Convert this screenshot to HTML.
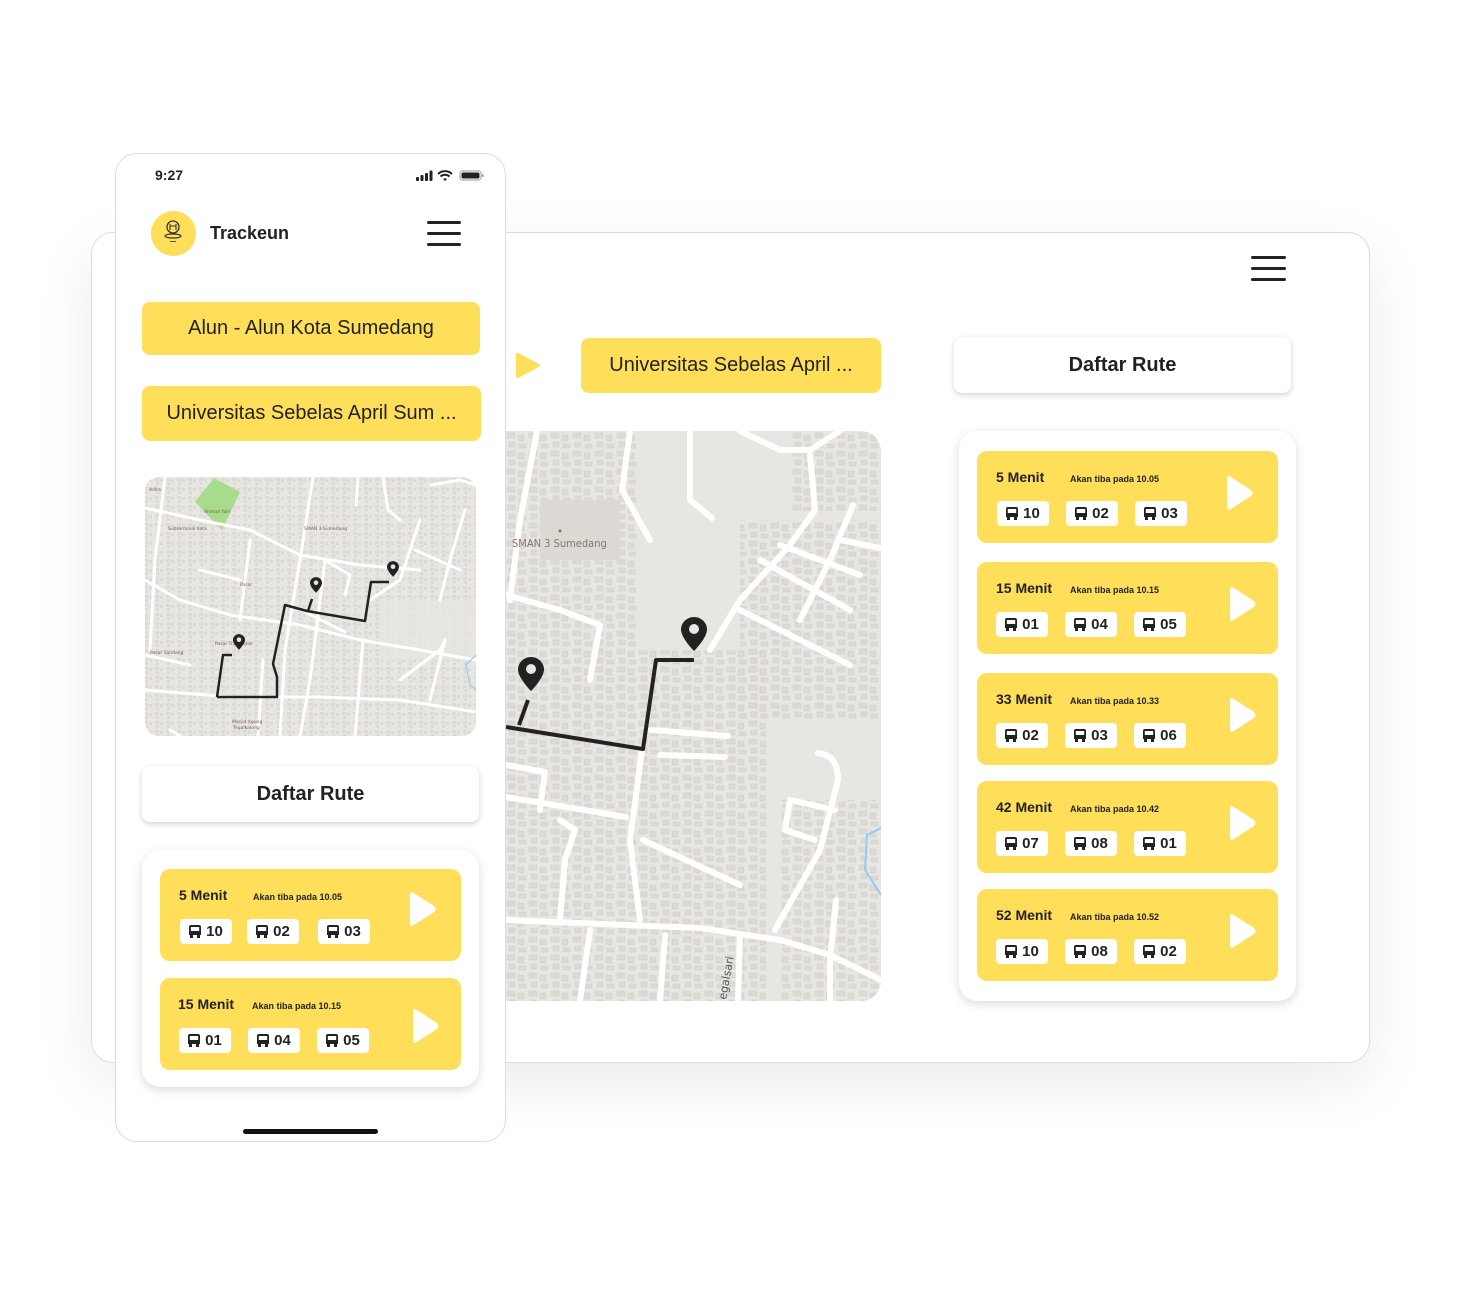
<!DOCTYPE html>
<html><head><meta charset="utf-8"><style>
*{margin:0;padding:0;box-sizing:border-box}
body{width:1461px;height:1295px;background:#fff;position:relative;overflow:hidden;font-family:"Liberation Sans",sans-serif;color:#222}
.abs{position:absolute}
.tablet{left:91px;top:232px;width:1279px;height:831px;border:1px solid #ddd;border-radius:22px;background:#fff;box-shadow:0 20px 60px rgba(0,0,0,0.08)}
.phone{left:115px;top:153px;width:391px;height:989px;border:1px solid #dcdcdc;border-radius:22px;background:#fff}
.ybtn{background:#FFDE59;border-radius:8px;font-size:20px;display:flex;align-items:center;justify-content:center;color:#222}
.wbtn{background:#fff;border-radius:8px;box-shadow:0 2px 6px rgba(0,0,0,0.18);font-size:20px;font-weight:bold;display:flex;align-items:center;justify-content:center;color:#222}
.panel{background:#fff;border-radius:18px;box-shadow:0 3px 10px rgba(0,0,0,0.15)}
.card{position:absolute;width:301px;height:92px;background:#FFDE59;border-radius:10px}
.card .t{position:absolute;left:19px;top:18px;font-size:14px;font-weight:bold;color:#222}
.card .s{position:absolute;left:93px;top:23px;font-size:9px;font-weight:bold;color:#222}
.chip{position:absolute;top:50px;width:52px;height:25px;background:#fff;border-radius:4px;font-size:15px;font-weight:bold;display:flex;align-items:center;justify-content:center;gap:5px;color:#222}
.chip svg{width:12px;height:13px}
.play{position:absolute;left:250px;top:24px}
.ham{position:absolute}
.ham i{display:block;height:3px;background:#222;border-radius:2px;margin-bottom:8px}
</style></head><body>
<svg width="0" height="0" style="position:absolute"><defs>
<symbol id="bus" viewBox="0 0 12 13"><path d="M2 0h8a2 2 0 0 1 2 2v8H0V2a2 2 0 0 1 2-2z" fill="#222"/><rect x="1.8" y="2" width="8.4" height="4" fill="#fff"/><rect x="1" y="10" width="3" height="3" fill="#222"/><rect x="8" y="10" width="3" height="3" fill="#222"/></symbol>
<symbol id="play" viewBox="0 0 26 36"><path d="M3 1.5Q0 0 0 4v28q0 4 3 2.5L24 21q3-3 0-6z" fill="#fff"/></symbol>
<pattern id="bld" width="22" height="18" patternUnits="userSpaceOnUse"><rect x="1" y="1" width="8" height="5" fill="#dad7d3" stroke="#cbc7c2" stroke-width=".5"/><rect x="12" y="3" width="6" height="6" fill="#dad7d3" stroke="#cbc7c2" stroke-width=".5"/><rect x="3" y="10" width="6" height="5" fill="#dad7d3" stroke="#cbc7c2" stroke-width=".5"/><rect x="13" y="12" width="7" height="4" fill="#dad7d3" stroke="#cbc7c2" stroke-width=".5"/></pattern>
<pattern id="bld2" width="11" height="9" patternUnits="userSpaceOnUse"><rect x="1" y="1" width="4" height="3" fill="#dad7d3"/><rect x="6" y="2" width="3" height="3" fill="#dad7d3"/><rect x="2" y="5" width="3" height="3" fill="#dad7d3"/></pattern>
<symbol id="pin" viewBox="0 0 26 34"><path d="M13 0C6 0 0 5.5 0 12.5 0 21 13 34 13 34S26 21 26 12.5C26 5.5 20 0 13 0z" fill="#222"/><circle cx="13" cy="12" r="5" fill="#e8e6e3"/></symbol>
</defs></svg>

<div class="abs tablet"></div>
<div class="ham" style="left:1251px;top:256px;width:35px"><i></i><i></i><i></i></div>
<svg class="abs" style="left:516px;top:352px" width="25" height="27" viewBox="0 0 25 27"><path d="M2 1Q0 0 0 3v21q0 3 2 2l21-11q2-1.5 0-3z" fill="#FFDE59"/></svg>
<div class="abs ybtn" style="left:581px;top:338px;width:300px;height:55px">Universitas Sebelas April ...</div>

<!-- big map -->
<svg class="abs" style="left:506px;top:431px" width="375" height="570" viewBox="506 431 375 570">
<defs><clipPath id="c1"><path d="M506 431H861a20 20 0 0 1 20 20V981a20 20 0 0 1-20 20H506z"/></clipPath></defs>
<g clip-path="url(#c1)">
<rect x="506" y="431" width="375" height="570" fill="#e8e6e3"/>
<g opacity=".8">
<rect x="506" y="431" width="130" height="570" fill="url(#bld)"/>
<rect x="636" y="650" width="130" height="351" fill="url(#bld)"/>
<rect x="740" y="520" width="141" height="200" fill="url(#bld)"/>
<rect x="790" y="431" width="91" height="80" fill="url(#bld)"/>
<rect x="780" y="800" width="101" height="201" fill="url(#bld)"/>
</g>
<rect x="540" y="500" width="80" height="60" fill="#dcd9d5"/>
<g fill="none" stroke="#fff" stroke-width="6" stroke-linecap="round" stroke-linejoin="round">
<path d="M537 431L520 520L510 600"/>
<path d="M506 595L560 610L600 625L590 680"/>
<path d="M630 431L622 490L650 540"/>
<path d="M690 431L690 500L712 518"/>
<path d="M740 431L780 450L810 450L840 431"/>
<path d="M810 455L815 510L790 545L740 600L710 650"/>
<path d="M853 505L830 560L800 620"/>
<path d="M740 610L850 665"/>
<path d="M760 560L850 610"/>
<path d="M780 545L860 575"/>
<path d="M881 548L840 540"/>
<path d="M506 920L700 928L780 940L830 955L881 980"/>
<path d="M506 765L545 772L540 810"/>
<path d="M506 797L626 817"/>
<path d="M642 750L630 840L640 920"/>
<path d="M643 840L740 885"/>
<path d="M651 730L728 736"/>
<path d="M660 755L725 757"/>
<path d="M818 753Q838 755 838 780L820 850L775 930"/>
<path d="M790 800L835 810"/>
<path d="M790 800L785 830L815 840"/>
<path d="M836 900L830 960L830 1001"/>
<path d="M590 930L580 1001"/>
<path d="M665 935L660 1001"/>
<path d="M740 935L738 1001"/>
<path d="M560 820L575 830L565 860L560 920"/>
</g>
<path d="M881 828L867 835L865 870L881 895" fill="none" stroke="#8fcdf2" stroke-width="2"/>
<circle cx="560" cy="531" r="1.5" fill="#8a6b5a"/>
<text x="512" y="547" font-size="11" fill="#8a7268" font-family="DejaVu Sans Condensed,DejaVu Sans,sans-serif">SMAN 3 Sumedang</text>
<text x="0" y="0" font-size="11" fill="#555" transform="translate(726 1000) rotate(-80)" font-family="DejaVu Sans,sans-serif">egalsari</text>
<path d="M506 727L643 749L656 660L694 660" fill="none" stroke="#222" stroke-width="4" stroke-linejoin="round"/>
<path d="M528 700L519 725" stroke="#222" stroke-width="4"/>
<use href="#pin" x="681" y="617" width="26" height="34"/>
<use href="#pin" x="518" y="657" width="26" height="34"/>
</g></svg>

<div class="abs wbtn" style="left:954px;top:337px;width:337px;height:56px">Daftar Rute</div>
<div class="abs panel" style="left:959px;top:431px;width:337px;height:570px"></div>

<div class="card" style="left:977px;top:451px"><div class="t">5 Menit</div><div class="s">Akan tiba pada 10.05</div>
<div class="chip" style="left:20px"><svg><use href="#bus"/></svg>10</div><div class="chip" style="left:89px"><svg><use href="#bus"/></svg>02</div><div class="chip" style="left:158px"><svg><use href="#bus"/></svg>03</div>
<svg class="play" width="26" height="36"><use href="#play"/></svg></div>
<div class="card" style="left:977px;top:562px"><div class="t">15 Menit</div><div class="s">Akan tiba pada 10.15</div>
<div class="chip" style="left:19px"><svg><use href="#bus"/></svg>01</div><div class="chip" style="left:88px"><svg><use href="#bus"/></svg>04</div><div class="chip" style="left:157px"><svg><use href="#bus"/></svg>05</div>
<svg class="play" style="left:253px" width="26" height="36"><use href="#play"/></svg></div>
<div class="card" style="left:977px;top:673px"><div class="t">33 Menit</div><div class="s">Akan tiba pada 10.33</div>
<div class="chip" style="left:19px"><svg><use href="#bus"/></svg>02</div><div class="chip" style="left:88px"><svg><use href="#bus"/></svg>03</div><div class="chip" style="left:157px"><svg><use href="#bus"/></svg>06</div>
<svg class="play" style="left:253px" width="26" height="36"><use href="#play"/></svg></div>
<div class="card" style="left:977px;top:781px"><div class="t">42 Menit</div><div class="s">Akan tiba pada 10.42</div>
<div class="chip" style="left:19px"><svg><use href="#bus"/></svg>07</div><div class="chip" style="left:88px"><svg><use href="#bus"/></svg>08</div><div class="chip" style="left:157px"><svg><use href="#bus"/></svg>01</div>
<svg class="play" style="left:253px" width="26" height="36"><use href="#play"/></svg></div>
<div class="card" style="left:977px;top:889px"><div class="t">52 Menit</div><div class="s">Akan tiba pada 10.52</div>
<div class="chip" style="left:19px"><svg><use href="#bus"/></svg>10</div><div class="chip" style="left:88px"><svg><use href="#bus"/></svg>08</div><div class="chip" style="left:157px"><svg><use href="#bus"/></svg>02</div>
<svg class="play" style="left:253px" width="26" height="36"><use href="#play"/></svg></div>

<!-- phone -->
<div class="abs phone"></div>
<div class="abs" style="left:155px;top:167px;font-size:14px;font-weight:bold">9:27</div>
<svg class="abs" style="left:416px;top:169px" width="68" height="13" viewBox="0 0 68 13">
<rect x="0" y="8" width="3" height="4" rx="1" fill="#222"/><rect x="4.5" y="6" width="3" height="6" rx="1" fill="#222"/><rect x="9" y="4" width="3" height="8" rx="1" fill="#222"/><rect x="13.5" y="1.5" width="3" height="10.5" rx="1" fill="#222"/>
<path d="M22 5a10 10 0 0 1 14 0M24.5 7.5a6.5 6.5 0 0 1 9 0" stroke="#222" stroke-width="2" fill="none"/><path d="M27 10l2 2 2-2a3 3 0 0 0-4 0z" fill="#222"/>
<rect x="44" y="2" width="21" height="9" rx="2.5" fill="none" stroke="#999"/><rect x="45.5" y="3.5" width="18" height="6" rx="1.5" fill="#222"/><rect x="66" y="5" width="1.5" height="3" fill="#999"/>
</svg>
<div class="abs" style="left:151px;top:211px;width:45px;height:45px;border-radius:50%;background:#FFDE59"></div>
<svg class="abs" style="left:160px;top:218px" width="26" height="28" viewBox="0 0 26 28"><circle cx="13" cy="9" r="6" fill="none" stroke="#333" stroke-width="1.3"/><path d="M10 6v6M16 6v6M10 8h6" stroke="#333" stroke-width="1.1"/><ellipse cx="13" cy="18" rx="8" ry="2" fill="none" stroke="#333" stroke-width="1.2"/><rect x="10" y="23" width="6" height=".8" fill="#333"/></svg>
<div class="abs" style="left:210px;top:223px;font-size:18px;font-weight:bold;color:#222">Trackeun</div>
<div class="ham" style="left:427px;top:221px;width:34px"><i style="height:3px;margin-bottom:8px"></i><i></i><i></i></div>
<div class="abs ybtn" style="left:142px;top:302px;width:338px;height:53px">Alun - Alun Kota Sumedang</div>
<div class="abs ybtn" style="left:142px;top:386px;width:339px;height:55px">Universitas Sebelas April Sum ...</div>

<svg class="abs" style="left:145px;top:477px" width="331" height="259" viewBox="145 477 331 259">
<defs><clipPath id="c2"><rect x="145" y="477" width="331" height="259" rx="14"/></clipPath></defs>
<g clip-path="url(#c2)">
<rect x="145" y="477" width="331" height="259" fill="#e8e6e3"/>
<rect x="145" y="477" width="331" height="259" fill="url(#bld2)" opacity=".8"/>
<rect x="380" y="600" width="96" height="60" fill="#e8e6e3" opacity=".7"/>
<path d="M195 502L214 478L240 492L222 530z" fill="#a6dc8b"/>
<g fill="none" stroke="#fff" stroke-width="3" stroke-linecap="round" stroke-linejoin="round">
<path d="M145 508L200 520L250 530L300 555L360 565L420 570"/>
<path d="M145 580L180 600L230 615L300 625L360 640L420 650L476 660"/>
<path d="M145 690L230 697L320 697L400 700L476 712"/>
<path d="M165 477L155 560L150 650"/>
<path d="M313 477L300 560L285 650L280 736"/>
<path d="M325 560L310 680L300 736"/>
<path d="M250 540L240 620"/>
<path d="M263 660L258 736"/>
<path d="M363 640L355 736"/>
<path d="M200 570L240 580"/>
<path d="M145 655L190 665"/>
<path d="M358 477L356 505"/>
<path d="M383 477L388 510L400 520"/>
<path d="M420 520L400 580L370 600"/>
<path d="M465 510L450 560L440 600"/>
<path d="M415 550L460 570"/>
<path d="M400 680L440 650L445 640L430 700"/>
<path d="M431 485L460 480L476 485"/>
<path d="M325 560L350 575L345 595"/>
<path d="M305 612L345 632"/>
<path d="M170 730L180 736"/>
</g>
<path d="M476 655L466 665L470 685L476 690" fill="none" stroke="#8fcdf2" stroke-width="1.2"/>
<g font-size="4.5" fill="#7a5c50" font-family="DejaVu Sans,sans-serif">
<text x="204" y="513">Ahmad Yani</text><text x="168" y="530">Subterminal Kota</text><text x="304" y="530">SMAN 3 Sumedang</text>
<text x="240" y="586">Pasar</text><text x="215" y="645">Pasar Tradisional</text><text x="150" y="654">Pasar Sandang</text>
<text x="232" y="723">Masjid Agung</text><text x="233" y="729">Tegalkalong</text><text x="149" y="491">Adira</text>
</g>
<path d="M217 697L223 655L232 655" fill="none" stroke="#222" stroke-width="2.5" stroke-linejoin="round"/>
<path d="M217 697L277 697L277 677L273 664L285 605L307 611L365 621L371 582L389 582" fill="none" stroke="#222" stroke-width="2.5" stroke-linejoin="round"/>
<path d="M308 611L312 599" stroke="#222" stroke-width="2.5"/>
<use href="#pin" x="310" y="577" width="12" height="16"/>
<use href="#pin" x="387" y="561" width="12" height="16"/>
<use href="#pin" x="233" y="634" width="12" height="16"/>
</g></svg>

<div class="abs wbtn" style="left:142px;top:766px;width:337px;height:56px">Daftar Rute</div>
<div class="abs panel" style="left:142px;top:850px;width:337px;height:237px"></div>
<div class="card" style="left:160px;top:869px"><div class="t">5 Menit</div><div class="s">Akan tiba pada 10.05</div>
<div class="chip" style="left:20px"><svg><use href="#bus"/></svg>10</div><div class="chip" style="left:87px"><svg><use href="#bus"/></svg>02</div><div class="chip" style="left:158px"><svg><use href="#bus"/></svg>03</div>
<svg class="play" style="left:250px;top:22px" width="26" height="36"><use href="#play"/></svg></div>
<div class="card" style="left:160px;top:978px"><div class="t" style="left:18px">15 Menit</div><div class="s" style="left:92px">Akan tiba pada 10.15</div>
<div class="chip" style="left:19px"><svg><use href="#bus"/></svg>01</div><div class="chip" style="left:88px"><svg><use href="#bus"/></svg>04</div><div class="chip" style="left:157px"><svg><use href="#bus"/></svg>05</div>
<svg class="play" style="left:253px;top:30px" width="26" height="36"><use href="#play"/></svg></div>
<div class="abs" style="left:243px;top:1129px;width:135px;height:5px;border-radius:3px;background:#111"></div>
</body></html>
